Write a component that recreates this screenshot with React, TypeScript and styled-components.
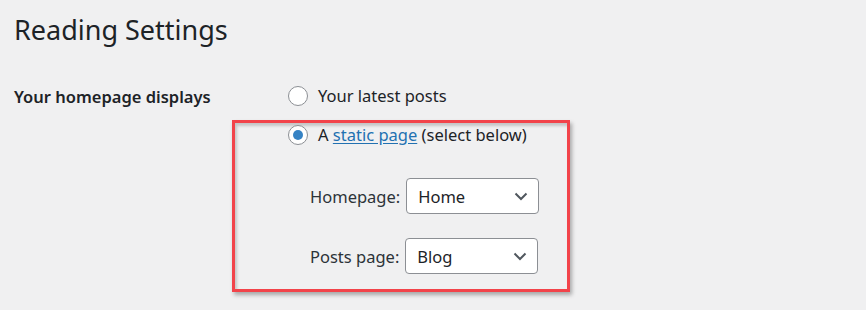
import * as React from "react";
import styled, { createGlobalStyle } from "styled-components";

const GlobalStyle = createGlobalStyle`
  html, body {
    margin: 0;
    padding: 0;
    background: #f0f0f1;
  }
  body {
    font-family: "Noto Sans", "Open Sans", sans-serif;
    color: #1d2327;
  }
`;

const Page = styled.div`
  width: 866px;
  height: 310px;
  padding: 0 14px;
  box-sizing: border-box;
  overflow: hidden;
`;

const Title = styled.h1`
  margin: 0;
  padding-top: 10px;
  font-size: 27px;
  font-weight: 400;
  line-height: 40px;
  color: #1d2327;
`;

const Row = styled.div`
  display: flex;
  margin-top: 34px;
`;

const RowLabel = styled.div`
  width: 274px;
  flex-shrink: 0;
  font-size: 16.5px;
  font-weight: 600;
  line-height: 24px;
  padding-top: 1px;
`;

const Field = styled.div`
  display: flex;
  flex-direction: column;
`;

const RadioLine = styled.label`
  display: flex;
  align-items: center;
  gap: 10px;
  height: 24px;
  font-size: 16.5px;
  line-height: 24px;
`;

const Radio = styled.span<{ $checked?: boolean }>`
  width: 20px;
  height: 20px;
  box-sizing: border-box;
  border-radius: 50%;
  border: 1px solid #8c8f94;
  background: #fff;
  display: flex;
  align-items: center;
  justify-content: center;

  &::after {
    content: "";
    display: ${(p) => (p.$checked ? "block" : "none")};
    width: 10px;
    height: 10px;
    border-radius: 50%;
    background: #3582c4;
  }
`;

const Link = styled.a`
  color: #2271b1;
  text-decoration: underline;
  text-underline-offset: 2px;
`;

const Highlight = styled.div`
  margin: 12px 0 0 -56px;
  width: 338px;
  border: 3px solid #f2434a;
  padding: 0 0 15px 53px;
  box-sizing: border-box;
  box-shadow: 2px 3px 4px rgba(0, 0, 0, 0.3), inset 2px 3px 3px rgba(0, 0, 0, 0.18);
`;

const PageList = styled.div`
  display: flex;
  flex-direction: column;
  gap: 24px;
  padding: 31px 0 0 22px;
`;

const PickLine = styled.div`
  display: flex;
  align-items: center;
  gap: 6px;
  font-size: 16.5px;
  color: #2c3338;
`;

const Select = styled.div`
  width: 133px;
  height: 36px;
  box-sizing: border-box;
  border: 1px solid #8c8f94;
  border-radius: 4px;
  background: #fff;
  display: flex;
  align-items: center;
  justify-content: space-between;
  padding: 0 9px 0 11px;
  font-size: 16.5px;
  color: #1d2327;
`;

const Chevron = () => (
  <svg width="16" height="16" viewBox="0 0 16 16" fill="none">
    <path d="M2.5 5.5 L8 11 L13.5 5.5" stroke="#50575e" strokeWidth="2" />
  </svg>
);

export default function App() {
  return (
    <Page>
      <GlobalStyle />
      <Title>Reading Settings</Title>
      <Row>
        <RowLabel>Your homepage displays</RowLabel>
        <Field>
          <RadioLine>
            <Radio />
            <span>Your latest posts</span>
          </RadioLine>
          <Highlight>
            <RadioLine>
              <Radio $checked />
              <span>
                A <Link>static page</Link> (select below)
              </span>
            </RadioLine>
            <PageList>
              <PickLine>
                <span>Homepage:</span>
                <Select>
                  Home
                  <Chevron />
                </Select>
              </PickLine>
              <PickLine>
                <span>Posts page:</span>
                <Select>
                  Blog
                  <Chevron />
                </Select>
              </PickLine>
            </PageList>
          </Highlight>
        </Field>
      </Row>
    </Page>
  );
}
